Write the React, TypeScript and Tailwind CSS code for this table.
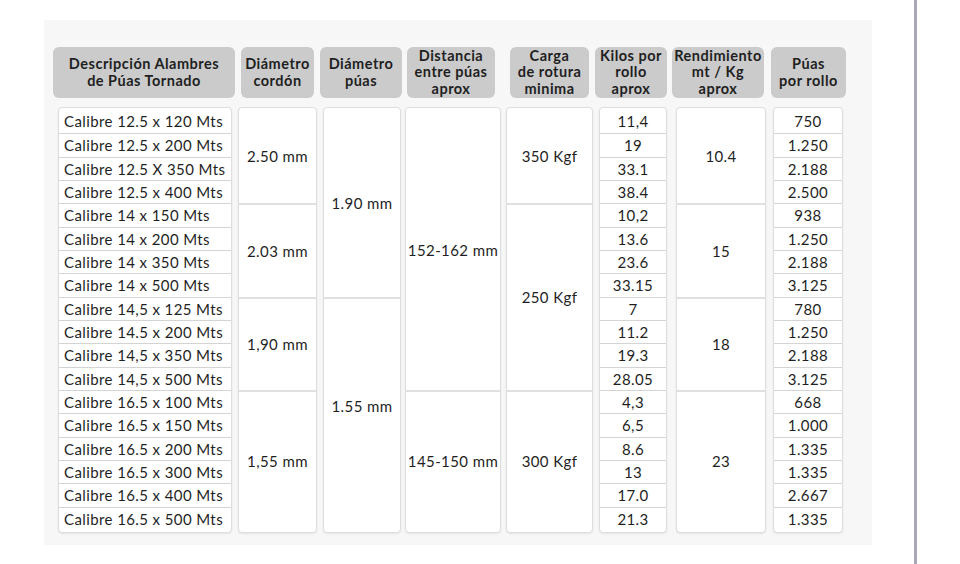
const font = { fontFamily: "Lato, 'Open Sans', sans-serif" };

const headers = [
  { lines: ["Descripción Alambres", "de Púas Tornado"], cls: "w-[182px]" },
  { lines: ["Diámetro", "cordón"], cls: "w-[73px] ml-[6px]" },
  { lines: ["Diámetro", "púas"], cls: "w-[82px] ml-[6px]" },
  { lines: ["Distancia", "entre púas", "aprox"], cls: "w-[88px] ml-[5px]" },
  { lines: ["Carga", "de rotura", "minima"], cls: "w-[79px] ml-[15px]" },
  { lines: ["Kilos por", "rollo", "aprox"], cls: "w-[72px] ml-[6px]" },
  { lines: ["Rendimiento", "mt / Kg", "aprox"], cls: "w-[92px] ml-[5px] text-[13px] tracking-[0.2px]" },
  { lines: ["Púas", "por rollo"], cls: "w-[75px] ml-[7px]" },
];

const names = [
  "Calibre 12.5 x 120 Mts",
  "Calibre 12.5 x 200 Mts",
  "Calibre 12.5 X 350 Mts",
  "Calibre 12.5 x 400 Mts",
  "Calibre 14 x 150 Mts",
  "Calibre 14 x 200 Mts",
  "Calibre 14 x 350 Mts",
  "Calibre 14 x 500 Mts",
  "Calibre 14,5 x 125 Mts",
  "Calibre 14.5 x 200 Mts",
  "Calibre 14,5 x 350 Mts",
  "Calibre 14,5 x 500 Mts",
  "Calibre 16.5 x 100 Mts",
  "Calibre 16.5 x 150 Mts",
  "Calibre 16.5 x 200 Mts",
  "Calibre 16.5 x 300 Mts",
  "Calibre 16.5 x 400 Mts",
  "Calibre 16.5 x 500 Mts",
];

const kilos = ["11,4", "19", "33.1", "38.4", "10,2", "13.6", "23.6", "33.15", "7", "11.2", "19.3", "28.05", "4,3", "6,5", "8.6", "13", "17.0", "21.3"];

const puas = ["750", "1.250", "2.188", "2.500", "938", "1.250", "2.188", "3.125", "780", "1.250", "2.188", "3.125", "668", "1.000", "1.335", "1.335", "2.667", "1.335"];

const span: Record<number, string> = {
  4: "row-span-4",
  6: "row-span-6",
  8: "row-span-8",
  10: "row-span-10",
  12: "row-span-12",
};

type Group = { n: number; text: string; extra?: string };

function ListColumn({ items, cls, align }: { items: string[]; cls: string; align: string }) {
  return (
    <div className={`h-full rounded-[4px] border border-[#dedede] bg-white py-[2px] shadow-[0_1px_2px_rgba(0,0,0,0.08)] ${cls}`}>
      <div className="grid h-full grid-rows-[repeat(18,minmax(0,1fr))]">
        {items.map((t, i) => (
          <div
            key={i}
            className={`flex items-center border-[#d4d4d4] ${i > 0 ? "border-t" : ""} ${align}`}
          >
            {t}
          </div>
        ))}
      </div>
    </div>
  );
}

function GroupColumn({ groups, cls }: { groups: Group[]; cls: string }) {
  return (
    <div className={`h-full rounded-[4px] border border-[#dedede] bg-white py-[2px] shadow-[0_1px_2px_rgba(0,0,0,0.08)] ${cls}`}>
      <div className="grid h-full grid-rows-[repeat(18,minmax(0,1fr))]">
        {groups.map((g, i) => (
          <div
            key={i}
            className={`flex items-center justify-center border-[#e0e0e0] ${i > 0 ? "border-t-2" : ""} ${span[g.n]} ${g.extra ?? ""}`}
          >
            {g.text}
          </div>
        ))}
      </div>
    </div>
  );
}

export default function App() {
  return (
    <div className="flex h-[564px] w-[960px] bg-white text-[#1f1f1f]" style={font}>
      <div className="ml-[44px] mt-[20px] flex h-[525px] w-[828px] flex-col bg-[#f7f7f7]">
        <div className="ml-[9px] mt-[27px] flex h-[51px]">
          {headers.map((h, i) => (
            <div
              key={i}
              className={`flex flex-col items-center justify-center rounded-[6px] bg-[#cbcbcb] text-[14.5px] font-bold leading-[16.5px] tracking-[0.5px] ${h.cls}`}
            >
              {h.lines.map((l) => (
                <span key={l} className="whitespace-nowrap">{l}</span>
              ))}
            </div>
          ))}
        </div>

        <div className="ml-[14px] mt-[9px] flex h-[426px] text-[15px] tracking-[0.4px]">
          <ListColumn items={names} cls="w-[174px]" align="pl-[5px]" />
          <GroupColumn
            cls="w-[79px] ml-[6px]"
            groups={[
              { n: 4, text: "2.50 mm" },
              { n: 4, text: "2.03 mm" },
              { n: 4, text: "1,90 mm" },
              { n: 6, text: "1,55 mm" },
            ]}
          />
          <GroupColumn
            cls="w-[78px] ml-[6px]"
            groups={[
              { n: 8, text: "1.90 mm" },
              { n: 10, text: "1.55 mm", extra: "pb-[16px]" },
            ]}
          />
          <GroupColumn
            cls="w-[96px] ml-[4px]"
            groups={[
              { n: 12, text: "152-162 mm" },
              { n: 6, text: "145-150 mm" },
            ]}
          />
          <GroupColumn
            cls="w-[87px] ml-[5px]"
            groups={[
              { n: 4, text: "350 Kgf" },
              { n: 8, text: "250 Kgf" },
              { n: 6, text: "300 Kgf" },
            ]}
          />
          <ListColumn items={kilos} cls="w-[68px] ml-[6px]" align="justify-center" />
          <GroupColumn
            cls="w-[90px] ml-[9px]"
            groups={[
              { n: 4, text: "10.4" },
              { n: 4, text: "15" },
              { n: 4, text: "18" },
              { n: 6, text: "23" },
            ]}
          />
          <ListColumn items={puas} cls="w-[70px] ml-[7px]" align="justify-center" />
        </div>
      </div>
      <div className="ml-[42px] h-full w-[3px] bg-[#a9a9b6]" />
    </div>
  );
}
